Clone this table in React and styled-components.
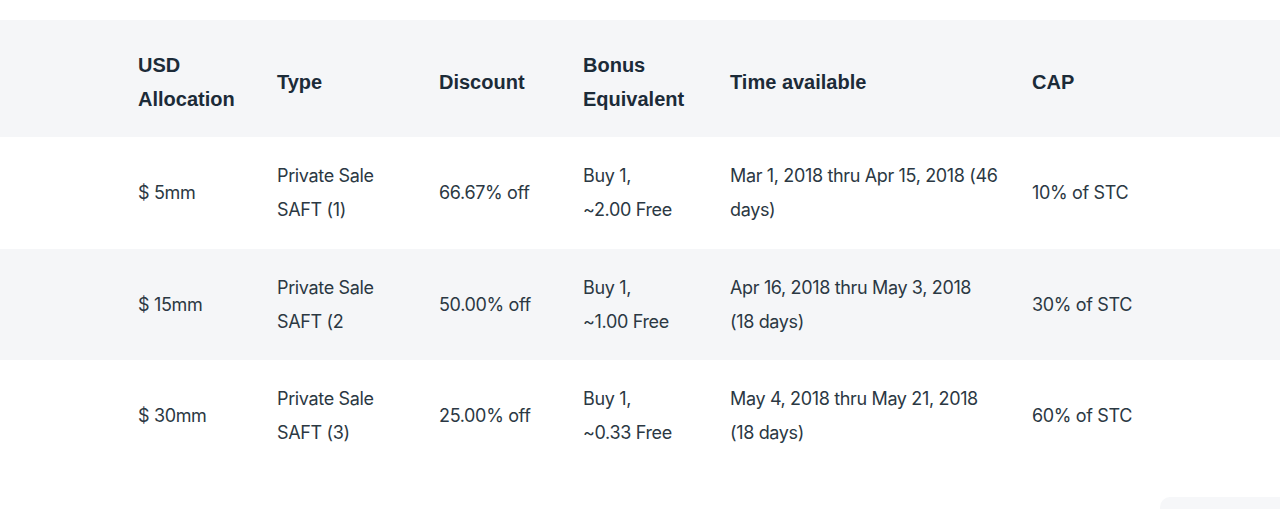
import React from "react";
import styled, { createGlobalStyle } from "styled-components";

const GlobalStyle = createGlobalStyle`
  html, body {
    margin: 0;
    padding: 0;
    background: #ffffff;
  }
  body {
    font-family: Inter, "Liberation Sans", sans-serif;
    overflow: hidden;
  }
`;

const Page = styled.div`
  position: relative;
  width: 1280px;
  height: 509px;
  padding-top: 20px;
  box-sizing: border-box;
  background: #ffffff;
  overflow: hidden;
`;

const Table = styled.table`
  width: 100%;
  border-collapse: collapse;
  table-layout: fixed;
`;

const HeadRow = styled.tr`
  background: #f5f6f8;
  height: 117px;
`;

const Row = styled.tr`
  background: ${(props) => (props.$shaded ? "#f5f6f8" : "#ffffff")};
  height: ${(props) => props.$height || "112px"};
`;

const Th = styled.th`
  text-align: left;
  vertical-align: middle;
  padding: 6px 10px 0 0;
  font-family: "Liberation Sans", Arial, sans-serif;
  font-weight: 700;
  font-size: 20px;
  line-height: 34px;
  color: #1c2b38;
  letter-spacing: 0;
`;

const Td = styled.td`
  text-align: left;
  vertical-align: middle;
  padding: 0 ${(props) => props.$padRight || "10px"} 0 0;
  font-family: Inter, "Liberation Sans", sans-serif;
  font-weight: 400;
  font-size: 18px;
  line-height: 34px;
  color: #2b3843;
  letter-spacing: -0.35px;
`;

const Gutter = styled.td`
  padding: 0;
`;

const Widget = styled.div`
  position: absolute;
  right: -20px;
  bottom: -30px;
  width: 140px;
  height: 42px;
  border-radius: 10px;
  background: #f6f7f9;
`;

const rows = [
  {
    usd: "$ 5mm",
    type: ["Private Sale", "SAFT (1)"],
    discount: "66.67% off",
    bonus: ["Buy 1,", "~2.00 Free"],
    time: "Mar 1, 2018 thru Apr 15, 2018 (46 days)",
    cap: "10% of STC",
  },
  {
    usd: "$ 15mm",
    type: ["Private Sale", "SAFT (2"],
    discount: "50.00% off",
    bonus: ["Buy 1,", "~1.00 Free"],
    time: "Apr 16, 2018 thru May 3, 2018 (18 days)",
    cap: "30% of STC",
  },
  {
    usd: "$ 30mm",
    type: ["Private Sale", "SAFT (3)"],
    discount: "25.00% off",
    bonus: ["Buy 1,", "~0.33 Free"],
    time: "May 4, 2018 thru May 21, 2018 (18 days)",
    cap: "60% of STC",
  },
];

const App = () => {
  return (
    <>
      <GlobalStyle />
      <Page>
        <Table>
          <colgroup>
            <col style={{ width: 138 }} />
            <col style={{ width: 139 }} />
            <col style={{ width: 162 }} />
            <col style={{ width: 144 }} />
            <col style={{ width: 147 }} />
            <col style={{ width: 302 }} />
            <col style={{ width: 160 }} />
            <col />
          </colgroup>
          <thead>
            <HeadRow>
              <Gutter />
              <Th>
                USD
                <br />
                Allocation
              </Th>
              <Th>Type</Th>
              <Th>Discount</Th>
              <Th>
                Bonus
                <br />
                Equivalent
              </Th>
              <Th>Time available</Th>
              <Th>CAP</Th>
              <Gutter />
            </HeadRow>
          </thead>
          <tbody>
            {rows.map((r, i) => (
              <Row key={r.usd} $shaded={i === 1} $height={i === 1 ? "111px" : "112px"}>
                <Gutter />
                <Td>{r.usd}</Td>
                <Td>
                  {r.type[0]}
                  <br />
                  {r.type[1]}
                </Td>
                <Td>{r.discount}</Td>
                <Td>
                  {r.bonus[0]}
                  <br />
                  {r.bonus[1]}
                </Td>
                <Td $padRight="34px">{r.time}</Td>
                <Td>{r.cap}</Td>
                <Gutter />
              </Row>
            ))}
          </tbody>
        </Table>
        <Widget />
      </Page>
    </>
  );
};

export default App;
